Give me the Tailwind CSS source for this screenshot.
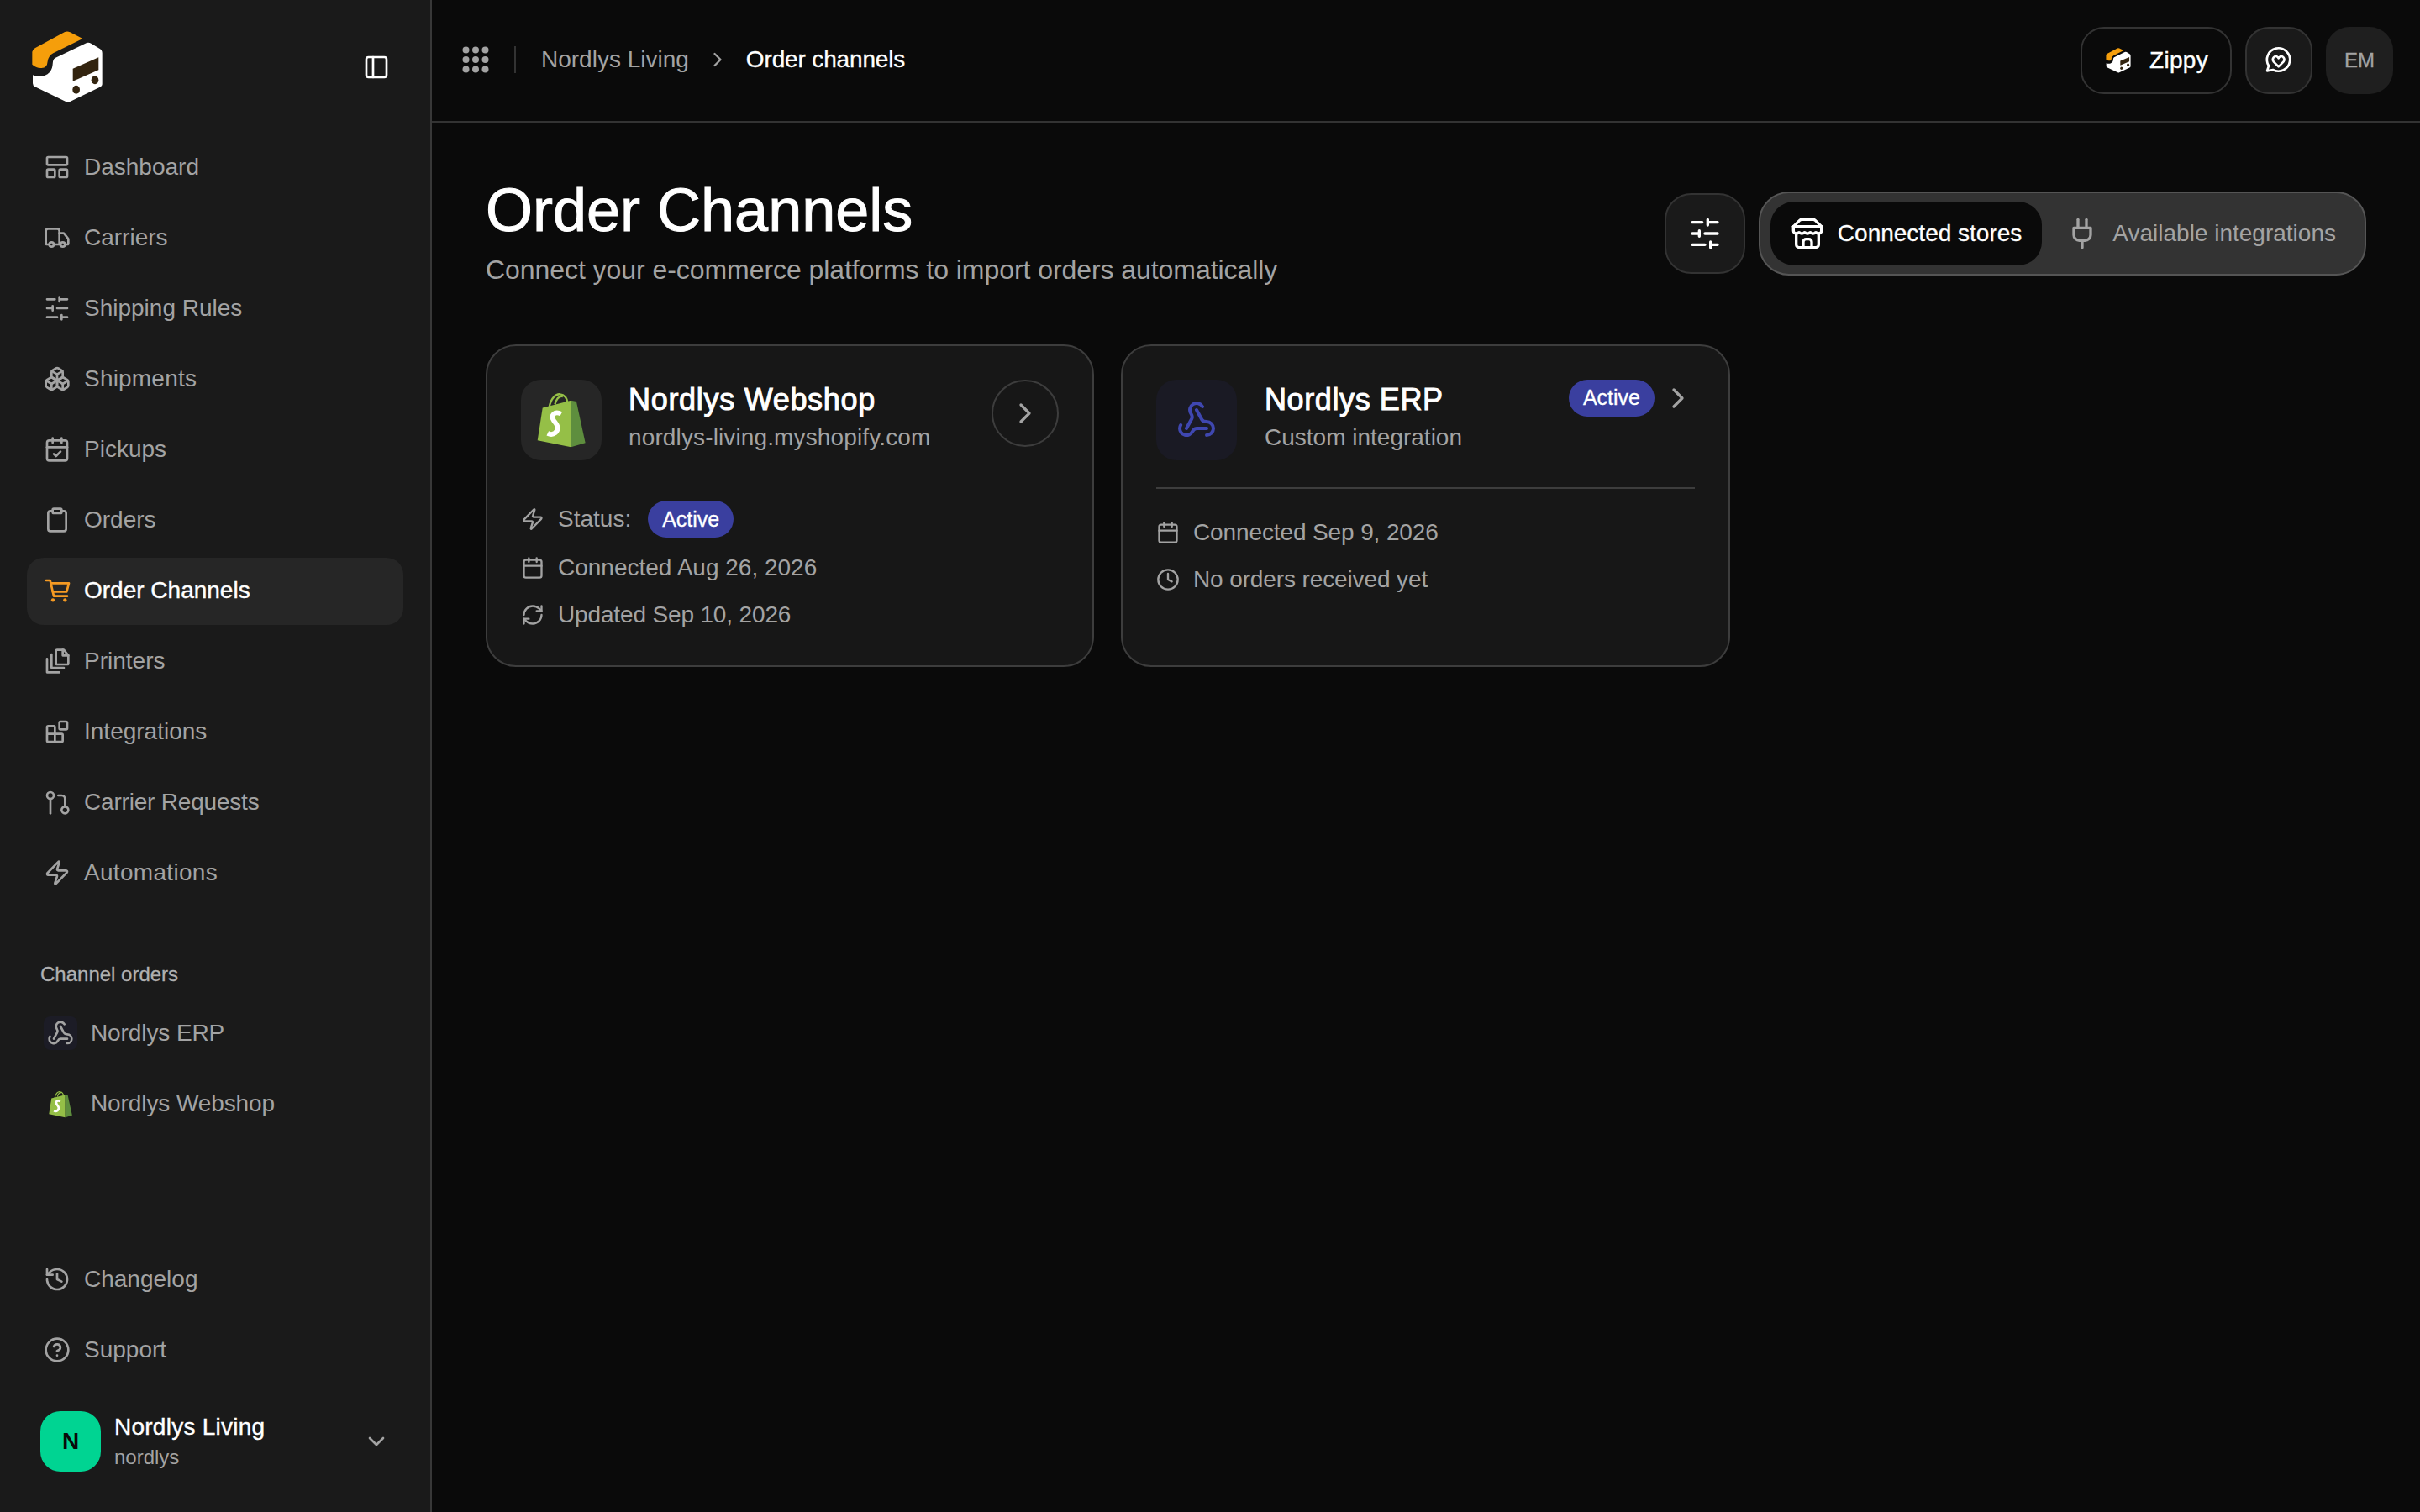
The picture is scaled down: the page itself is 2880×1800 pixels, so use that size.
<!DOCTYPE html>
<html lang="en">
<head>
<meta charset="utf-8">
<title>Order Channels</title>
<script src="https://cdn.jsdelivr.net/npm/@tailwindcss/browser@4"></script>
</head>
<body class="m-0 bg-[#0a0a0a] font-['Liberation_Sans',Arial,sans-serif]">
<svg width="0" height="0" class="absolute">
  <defs>
    <symbol id="logo" viewBox="0 0 360 360">
      <path fill="#fff" d="M57 208C75 215 100 217 118 197C135 175 122 157 137 147L245 95Q255 90 265 95L295 113Q305 118 305 130L305 240Q305 248 295 252L190 303Q183 306 175 303L65 250Q57 246 57 238Z"/>
      <path fill="#f59e0b" d="M55 125Q55 118 65 112L170 55Q180 50 190 55L235 78L130 130Q112 140 110 160Q108 185 85 183Q70 183 55 170Z"/>
      <path fill="#33240f" d="M200 185L292 145V190L200 230Z"/>
      <ellipse cx="212" cy="260" rx="13" ry="15" fill="#33240f"/>
      <ellipse cx="279" cy="226" rx="13" ry="15" fill="#33240f"/>
    </symbol>
    <symbol id="bag" viewBox="80 62 185 203">
      <path d="M130 118C135 85 155 70 168 72C185 74 193 88 195 103M150 108C155 88 165 78 178 80" fill="none" stroke="#95bf47" stroke-width="7"/>
      <path fill="#95bf47" d="M106 120L207 94L207 260L88 236Z"/>
      <path fill="#5e8e3e" d="M207 94L226 98L258 245L207 260Z"/>
      <path d="M172 142C150 130 132 146 146 166C160 182 166 196 151 209C141 217 130 214 124 211" fill="none" stroke="#fff" stroke-width="17"/>
    </symbol>
  </defs>
</svg>
<div class="flex h-[1800px] w-[2880px] overflow-hidden">
  <aside class="flex h-full w-[514px] shrink-0 flex-col border-r-2 border-[#383838] bg-[#1a1a1a]">
    <div class="flex h-[160px] shrink-0 items-start justify-between pt-[20px] pl-[20px] pr-[48px]">
      <svg class="h-[120px] w-[120px]"><use href="#logo"/></svg>
      <svg class="mt-[44px] h-[32px] w-[32px] text-white" viewBox="0 0 24 24" fill="none" stroke="currentColor" stroke-width="2" stroke-linecap="round" stroke-linejoin="round"><rect x="3" y="3" width="18" height="18" rx="2"/><path d="M9 3v18"/></svg>
    </div>
    <nav class="flex flex-col gap-[4px] px-[32px] text-[28px] text-[#a3a3a3]">
      <a class="flex h-[80px] items-center gap-[16px] px-[20px] pb-[2px]"><svg class="h-[32px] w-[32px] shrink-0" viewBox="0 0 24 24" fill="none" stroke="currentColor" stroke-width="2" stroke-linecap="round" stroke-linejoin="round"><rect x="3" y="3" width="18" height="7" rx="1"/><rect x="3" y="14" width="7" height="7" rx="1"/><rect x="14" y="14" width="7" height="7" rx="1"/></svg>Dashboard</a>
      <a class="flex h-[80px] items-center gap-[16px] px-[20px] pb-[2px]"><svg class="h-[32px] w-[32px] shrink-0" viewBox="0 0 24 24" fill="none" stroke="currentColor" stroke-width="2" stroke-linecap="round" stroke-linejoin="round"><path d="M14 18V6a2 2 0 0 0-2-2H4a2 2 0 0 0-2 2v11a1 1 0 0 0 1 1h2"/><path d="M15 18H9"/><path d="M19 18h2a1 1 0 0 0 1-1v-3.65a1 1 0 0 0-.22-.624l-3.48-4.35A1 1 0 0 0 17.52 8H14"/><circle cx="17" cy="18" r="2"/><circle cx="7" cy="18" r="2"/></svg>Carriers</a>
      <a class="flex h-[80px] items-center gap-[16px] px-[20px] pb-[2px]"><svg class="h-[32px] w-[32px] shrink-0" viewBox="0 0 24 24" fill="none" stroke="currentColor" stroke-width="2" stroke-linecap="round" stroke-linejoin="round"><path d="M21 4h-7M10 4H3M21 12h-9M8 12H3M21 20h-5M12 20H3M14 2v4M8 10v4M16 18v4"/></svg>Shipping Rules</a>
      <a class="flex h-[80px] items-center gap-[16px] px-[20px] pb-[2px] tracking-[0.2px]"><svg class="h-[32px] w-[32px] shrink-0" viewBox="0 0 24 24" fill="none" stroke="currentColor" stroke-width="2" stroke-linecap="round" stroke-linejoin="round"><path d="M2.97 12.92A2 2 0 0 0 2 14.63v3.24a2 2 0 0 0 .97 1.71l3 1.8a2 2 0 0 0 2.06 0L12 19v-5.5l-5-3-4.03 2.42Z"/><path d="m7 16.5-4.74-2.85"/><path d="m7 16.5 5-3"/><path d="M7 16.5v5.17"/><path d="M12 13.5V19l3.97 2.38a2 2 0 0 0 2.06 0l3-1.8a2 2 0 0 0 .97-1.71v-3.24a2 2 0 0 0-.97-1.71L17 10.5l-5 3Z"/><path d="m17 16.5-5-3"/><path d="m17 16.5 4.74-2.85"/><path d="M17 16.5v5.17"/><path d="M7.97 4.42A2 2 0 0 0 7 6.13v4.37l5 3 5-3V6.13a2 2 0 0 0-.97-1.71l-3-1.8a2 2 0 0 0-2.06 0l-3 1.8Z"/><path d="M12 8 7.26 5.15"/><path d="m12 8 4.74-2.85"/><path d="M12 13.5V8"/></svg>Shipments</a>
      <a class="flex h-[80px] items-center gap-[16px] px-[20px] pb-[2px]"><svg class="h-[32px] w-[32px] shrink-0" viewBox="0 0 24 24" fill="none" stroke="currentColor" stroke-width="2" stroke-linecap="round" stroke-linejoin="round"><path d="M8 2v4M16 2v4"/><rect x="3" y="4" width="18" height="18" rx="2"/><path d="M3 10h18"/><path d="m9 16 2 2 4-4"/></svg>Pickups</a>
      <a class="flex h-[80px] items-center gap-[16px] px-[20px] pb-[2px]"><svg class="h-[32px] w-[32px] shrink-0" viewBox="0 0 24 24" fill="none" stroke="currentColor" stroke-width="2" stroke-linecap="round" stroke-linejoin="round"><rect x="8" y="2" width="8" height="4" rx="1"/><path d="M16 4h2a2 2 0 0 1 2 2v14a2 2 0 0 1-2 2H6a2 2 0 0 1-2-2V6a2 2 0 0 1 2-2h2"/></svg>Orders</a>
      <a class="flex h-[80px] items-center gap-[16px] rounded-[20px] bg-[#262626] px-[20px] pb-[2px] text-white [-webkit-text-stroke:0.4px]"><svg class="h-[32px] w-[32px] shrink-0 text-[#f59a23]" viewBox="24 24 96 96" fill="none" stroke="currentColor" stroke-width="8" stroke-linecap="round" stroke-linejoin="round"><path d="M33 36H47L60 92H108"/><path d="M50 46H114L106 76H56"/><circle cx="57" cy="106" r="6.5" fill="currentColor" stroke="none"/><circle cx="100" cy="106" r="6.5" fill="currentColor" stroke="none"/></svg>Order Channels</a>
      <a class="flex h-[80px] items-center gap-[16px] px-[20px] pb-[2px]"><svg class="h-[32px] w-[32px] shrink-0" viewBox="0 0 24 24" fill="none" stroke="currentColor" stroke-width="2" stroke-linecap="round" stroke-linejoin="round"><path d="M22 7v7a1 1 0 0 1-1 1H12a1 1 0 0 1-1-1V3a1 1 0 0 1 1-1h6z"/><path d="M17 2v5h5"/><path d="M7 6v12h11"/><path d="M3 10v12h11"/></svg>Printers</a>
      <a class="flex h-[80px] items-center gap-[16px] px-[20px] pb-[2px]"><svg class="h-[32px] w-[32px] shrink-0" viewBox="0 0 24 24" fill="none" stroke="currentColor" stroke-width="2" stroke-linecap="round" stroke-linejoin="round"><rect x="14" y="3" width="7" height="7" rx="1"/><path d="M10 21V8a1 1 0 0 0-1-1H4a1 1 0 0 0-1 1v12a1 1 0 0 0 1 1h12a1 1 0 0 0 1-1v-5a1 1 0 0 0-1-1H3"/></svg>Integrations</a>
      <a class="flex h-[80px] items-center gap-[16px] px-[20px] pb-[2px] tracking-[-0.2px]"><svg class="h-[32px] w-[32px] shrink-0" viewBox="0 0 24 24" fill="none" stroke="currentColor" stroke-width="2" stroke-linecap="round" stroke-linejoin="round"><circle cx="6" cy="6" r="3"/><path d="M6 9v13"/><path d="M13 6h3a3 3 0 0 1 3 3v7"/><circle cx="19" cy="19" r="3"/></svg>Carrier Requests</a>
      <a class="flex h-[80px] items-center gap-[16px] px-[20px] pb-[2px] tracking-[0.3px]"><svg class="h-[32px] w-[32px] shrink-0" viewBox="0 0 24 24" fill="none" stroke="currentColor" stroke-width="2" stroke-linecap="round" stroke-linejoin="round"><path d="M4 14a1 1 0 0 1-.78-1.63l9.9-10.2a.5.5 0 0 1 .86.46l-1.92 6.02A1 1 0 0 0 13 10h7a1 1 0 0 1 .78 1.63l-9.9 10.2a.5.5 0 0 1-.86-.46l1.92-6.02A1 1 0 0 0 11 14z"/></svg>Automations</a>
    </nav>
    <div class="mt-[64px] mb-[14px] px-[48px] text-[24px] leading-[32px] text-[#b0b0b0] [-webkit-text-stroke:0.3px]">Channel orders</div>
    <div class="flex flex-col gap-[4px] px-[32px] text-[28px] text-[#a3a3a3]">
      <a class="flex h-[80px] items-center gap-[16px] px-[20px] tracking-[-0.1px]"><span class="flex h-[40px] w-[40px] shrink-0 items-center justify-center rounded-[8px] bg-[#1c1c26]"><svg class="h-[32px] w-[32px]" viewBox="0 0 24 24" fill="none" stroke="currentColor" stroke-width="2" stroke-linecap="round" stroke-linejoin="round"><path d="M18 16.98h-5.99c-1.1 0-1.95.94-2.48 1.9A4 4 0 0 1 2 17c.01-.7.2-1.4.57-2"/><path d="m6 17 3.13-5.78c.53-.97.1-2.18-.5-3.1a4 4 0 1 1 6.89-4.06"/><path d="m12 6 3.13 5.73C15.66 12.7 16.9 13 18 13a4 4 0 0 1 0 8"/></svg></span>Nordlys ERP</a>
      <a class="flex h-[80px] items-center gap-[16px] px-[20px] tracking-[-0.1px]"><span class="flex h-[40px] w-[40px] shrink-0 items-center justify-center"><svg class="h-[33px] w-[30px]"><use href="#bag"/></svg></span>Nordlys Webshop</a>
    </div>
    <div class="flex-1"></div>
    <div class="flex flex-col gap-[4px] px-[32px] text-[28px] text-[#a3a3a3]">
      <a class="flex h-[80px] items-center gap-[16px] px-[20px]"><svg class="h-[32px] w-[32px] shrink-0" viewBox="0 0 24 24" fill="none" stroke="currentColor" stroke-width="2" stroke-linecap="round" stroke-linejoin="round"><path d="M3 12a9 9 0 1 0 9-9 9.75 9.75 0 0 0-6.74 2.74L3 8"/><path d="M3 3v5h5"/><path d="M12 7v5l4 2"/></svg>Changelog</a>
      <a class="flex h-[80px] items-center gap-[16px] px-[20px]"><svg class="h-[32px] w-[32px] shrink-0" viewBox="0 0 24 24" fill="none" stroke="currentColor" stroke-width="2" stroke-linecap="round" stroke-linejoin="round"><circle cx="12" cy="12" r="10"/><path d="M9.09 9a3 3 0 0 1 5.83 1c0 2-3 3-3 3"/><path d="M12 17h.01"/></svg>Support</a>
    </div>
    <div class="mt-[33px] mb-[48px] flex items-center gap-[16px] pl-[48px] pr-[48px]">
      <span class="flex h-[72px] w-[72px] shrink-0 items-center justify-center rounded-[24px] bg-[#00d492] text-[28px] font-bold text-[#0a0a0a]">N</span>
      <div class="min-w-0 flex-1">
        <div class="text-[28px] leading-[36px] tracking-[0.25px] text-white [-webkit-text-stroke:0.4px]">Nordlys Living</div>
        <div class="mt-[2px] text-[24px] leading-[32px] text-[#a3a3a3]">nordlys</div>
      </div>
      <svg class="h-[32px] w-[32px] shrink-0 text-[#a3a3a3]" viewBox="0 0 24 24" fill="none" stroke="currentColor" stroke-width="2" stroke-linecap="round" stroke-linejoin="round"><path d="m6 9 6 6 6-6"/></svg>
    </div>
  </aside>
  <main class="flex min-w-0 flex-1 flex-col">
    <header class="flex h-[146px] shrink-0 items-center justify-between border-b-2 border-[#333333] pl-[36px] pr-[32px]">
      <div class="-mt-[2px] flex items-center text-[28px]">
        <svg class="h-[32px] w-[32px] text-[#a3a3a3]" viewBox="0 0 32 32" fill="currentColor"><circle cx="4.5" cy="4.5" r="4"/><circle cx="16" cy="4.5" r="4"/><circle cx="27.5" cy="4.5" r="4"/><circle cx="4.5" cy="16" r="4"/><circle cx="16" cy="16" r="4"/><circle cx="27.5" cy="16" r="4"/><circle cx="4.5" cy="27.5" r="4"/><circle cx="16" cy="27.5" r="4"/><circle cx="27.5" cy="27.5" r="4"/></svg>
        <span class="mx-[30px] h-[32px] w-[2px] bg-[#333333]"></span>
        <span class="text-[#a3a3a3]">Nordlys Living</span>
        <svg class="mx-[20px] h-[28px] w-[28px] text-[#a3a3a3]" viewBox="0 0 24 24" fill="none" stroke="currentColor" stroke-width="2" stroke-linecap="round" stroke-linejoin="round"><path d="m9 18 6-6-6-6"/></svg>
        <span class="tracking-[-0.15px] text-white [-webkit-text-stroke:0.3px]">Order channels</span>
      </div>
      <div class="flex items-center gap-[16px]">
        <button class="flex h-[80px] items-center gap-[16px] rounded-[28px] border-2 border-[#333333] bg-[#0a0a0a] pl-[22px] pr-[26px] text-[28px] tracking-[0.3px] text-white [-webkit-text-stroke:0.4px]"><svg class="h-[42px] w-[42px]"><use href="#logo"/></svg>Zippy</button>
        <button class="flex h-[80px] w-[80px] items-center justify-center rounded-[28px] border-2 border-[#333333] bg-[#1a1a1a] text-white"><svg class="h-[64px] w-[64px]" viewBox="0 0 192 192" fill="none" stroke="currentColor" stroke-width="8" stroke-linecap="round" stroke-linejoin="round"><path d="M75 129A41 41 0 1 0 60 115L54 133Z"/><path d="M95 118L77 100C70 90 80 78 89 82Q93 84 95 88Q97 84 101 82C110 78 120 90 113 100Z"/></svg></button>
        <span class="flex h-[80px] w-[80px] items-center justify-center rounded-[28px] bg-[#1f1f1f] text-[24px] text-[#a3a3a3] [-webkit-text-stroke:0.3px]">EM</span>
      </div>
    </header>
    <section class="px-[64px] pt-[64px]">
      <div class="mb-[66px] flex items-center justify-between">
        <div>
          <h1 class="text-[72px] leading-[80px] font-normal text-white [-webkit-text-stroke:1px]">Order Channels</h1>
          <p class="mt-[8px] text-[32px] leading-[46px] tracking-[-0.06px] text-[#a3a3a3]">Connect your e-commerce platforms to import orders automatically</p>
        </div>
        <div class="mt-[2px] flex items-center gap-[16px]">
          <button class="flex h-[96px] w-[96px] items-center justify-center rounded-[32px] border-2 border-[#333333] bg-[#1a1a1a] text-white"><svg class="h-[40px] w-[40px]" viewBox="0 0 24 24" fill="none" stroke="currentColor" stroke-width="2" stroke-linecap="round" stroke-linejoin="round"><path d="M21 4h-7M10 4H3M21 12h-9M8 12H3M21 20h-5M12 20H3M14 2v4M8 10v4M16 18v4"/></svg></button>
          <div class="flex h-[100px] items-center gap-[4px] rounded-[36px] border-2 border-[#555555] bg-[#333333] py-[10px] pr-[10px] pl-[12px] text-[28px]">
            <button class="flex h-[76px] items-center gap-[16px] rounded-[28px] bg-[#0a0a0a] px-[24px] text-white [-webkit-text-stroke:0.3px]"><svg class="h-[40px] w-[40px]" viewBox="0 0 24 24" fill="none" stroke="currentColor" stroke-width="2" stroke-linecap="round" stroke-linejoin="round"><path d="m2 7 4.41-4.41A2 2 0 0 1 7.83 2h8.34a2 2 0 0 1 1.42.59L22 7"/><path d="M4 12v8a2 2 0 0 0 2 2h12a2 2 0 0 0 2-2v-8"/><path d="M15 22v-4a2 2 0 0 0-2-2h-2a2 2 0 0 0-2 2v4"/><path d="M2 7h20"/><path d="M22 7v3a2 2 0 0 1-2 2a2.7 2.7 0 0 1-1.59-.63.7.7 0 0 0-.82 0A2.7 2.7 0 0 1 16 12a2.7 2.7 0 0 1-1.59-.63.7.7 0 0 0-.82 0A2.7 2.7 0 0 1 12 12a2.7 2.7 0 0 1-1.59-.63.7.7 0 0 0-.82 0A2.7 2.7 0 0 1 8 12a2.7 2.7 0 0 1-1.59-.63.7.7 0 0 0-.82 0A2.7 2.7 0 0 1 4 12a2 2 0 0 1-2-2V7"/></svg>Connected stores</button>
            <button class="flex h-[76px] items-center gap-[16px] px-[24px] text-[#a3a3a3]"><svg class="h-[40px] w-[40px]" viewBox="0 0 24 24" fill="none" stroke="currentColor" stroke-width="2" stroke-linecap="round" stroke-linejoin="round"><path d="M12 22v-5"/><path d="M9 8V2"/><path d="M15 8V2"/><path d="M18 8v5a4 4 0 0 1-4 4h-4a4 4 0 0 1-4-4V8Z"/></svg>Available integrations</button>
          </div>
        </div>
      </div>
      <div class="grid grid-cols-[724px_725px_1fr] gap-[32px]">
        <article class="rounded-[36px] border-2 border-[#3d3d3d] bg-[#171717] p-[40px]">
          <div class="flex items-start gap-[32px]">
            <span class="flex h-[96px] w-[96px] shrink-0 items-center justify-center rounded-[24px] bg-[#262626]"><svg class="h-[68px] w-[62px]"><use href="#bag"/></svg></span>
            <div class="min-w-0 flex-1">
              <div class="text-[36px] leading-[48px] tracking-[0.7px] text-white [-webkit-text-stroke:1px]">Nordlys Webshop</div>
              <div class="mt-[1px] text-[28px] leading-[40px] tracking-[0.13px] text-[#a3a3a3]">nordlys-living.myshopify.com</div>
            </div>
            <span class="flex h-[80px] w-[80px] shrink-0 items-center justify-center rounded-full border-2 border-[#3d3d3d] text-[#a3a3a3]"><svg class="h-[40px] w-[40px]" viewBox="0 0 24 24" fill="none" stroke="currentColor" stroke-width="2" stroke-linecap="round" stroke-linejoin="round"><path d="m9 18 6-6-6-6"/></svg></span>
          </div>
          <div class="mt-[48px] flex flex-col gap-[16px] text-[28px] leading-[40px] text-[#a3a3a3]">
            <div class="flex h-[44px] items-center gap-[16px]"><svg class="h-[28px] w-[28px] shrink-0" viewBox="0 0 24 24" fill="none" stroke="currentColor" stroke-width="2" stroke-linecap="round" stroke-linejoin="round"><path d="M4 14a1 1 0 0 1-.78-1.63l9.9-10.2a.5.5 0 0 1 .86.46l-1.92 6.02A1 1 0 0 0 13 10h7a1 1 0 0 1 .78 1.63l-9.9 10.2a.5.5 0 0 1-.86-.46l1.92-6.02A1 1 0 0 0 11 14z"/></svg>Status:<span class="ml-[4px] flex h-[44px] items-center rounded-full bg-[#3a3f9f] px-[17px] text-[25px] text-white [-webkit-text-stroke:0.3px]">Active</span></div>
            <div class="flex h-[40px] items-center gap-[16px]"><svg class="h-[28px] w-[28px] shrink-0" viewBox="0 0 24 24" fill="none" stroke="currentColor" stroke-width="2" stroke-linecap="round" stroke-linejoin="round"><path d="M8 2v4M16 2v4"/><rect x="3" y="4" width="18" height="18" rx="2"/><path d="M3 10h18"/></svg>Connected Aug 26, 2026</div>
            <div class="flex h-[40px] items-center gap-[16px] tracking-[-0.15px]"><svg class="h-[28px] w-[28px] shrink-0" viewBox="0 0 24 24" fill="none" stroke="currentColor" stroke-width="2" stroke-linecap="round" stroke-linejoin="round"><path d="M3 12a9 9 0 0 1 9-9 9.75 9.75 0 0 1 6.74 2.74L21 8"/><path d="M21 3v5h-5"/><path d="M21 12a9 9 0 0 1-9 9 9.75 9.75 0 0 1-6.74-2.74L3 16"/><path d="M8 16H3v5"/></svg>Updated Sep 10, 2026</div>
          </div>
        </article>
        <article class="rounded-[36px] border-2 border-[#3d3d3d] bg-[#171717] p-[40px]">
          <div class="flex items-start gap-[33px]">
            <span class="flex h-[96px] w-[96px] shrink-0 items-center justify-center rounded-[24px] bg-[#1a1a24] text-[#3f47b0]"><svg class="h-[48px] w-[48px]" viewBox="0 0 24 24" fill="none" stroke="currentColor" stroke-width="2" stroke-linecap="round" stroke-linejoin="round"><path d="M18 16.98h-5.99c-1.1 0-1.95.94-2.48 1.9A4 4 0 0 1 2 17c.01-.7.2-1.4.57-2"/><path d="m6 17 3.13-5.78c.53-.97.1-2.18-.5-3.1a4 4 0 1 1 6.89-4.06"/><path d="m12 6 3.13 5.73C15.66 12.7 16.9 13 18 13a4 4 0 0 1 0 8"/></svg></span>
            <div class="min-w-0 flex-1">
              <div class="text-[36px] leading-[48px] tracking-[0.6px] text-white [-webkit-text-stroke:1px]">Nordlys ERP</div>
              <div class="mt-[1px] text-[28px] leading-[40px] text-[#a3a3a3]">Custom integration</div>
            </div>
            <div class="flex items-center gap-[8px]">
              <span class="flex h-[44px] items-center rounded-full bg-[#3a3f9f] px-[17px] text-[25px] text-white [-webkit-text-stroke:0.3px]">Active</span>
              <svg class="h-[40px] w-[40px] text-[#a3a3a3]" viewBox="0 0 24 24" fill="none" stroke="currentColor" stroke-width="2" stroke-linecap="round" stroke-linejoin="round"><path d="m9 18 6-6-6-6"/></svg>
            </div>
          </div>
          <div class="mt-[32px] h-[2px] bg-[#3d3d3d]"></div>
          <div class="mt-[32px] flex flex-col gap-[16px] text-[28px] leading-[40px] tracking-[-0.12px] text-[#a3a3a3]">
            <div class="flex h-[40px] items-center gap-[16px]"><svg class="h-[28px] w-[28px] shrink-0" viewBox="0 0 24 24" fill="none" stroke="currentColor" stroke-width="2" stroke-linecap="round" stroke-linejoin="round"><path d="M8 2v4M16 2v4"/><rect x="3" y="4" width="18" height="18" rx="2"/><path d="M3 10h18"/></svg>Connected Sep 9, 2026</div>
            <div class="flex h-[40px] items-center gap-[16px]"><svg class="h-[28px] w-[28px] shrink-0" viewBox="0 0 24 24" fill="none" stroke="currentColor" stroke-width="2" stroke-linecap="round" stroke-linejoin="round"><circle cx="12" cy="12" r="10"/><path d="M12 6v6l4 2"/></svg>No orders received yet</div>
          </div>
        </article>
      </div>
    </section>
  </main>
</div>
</body>
</html>
